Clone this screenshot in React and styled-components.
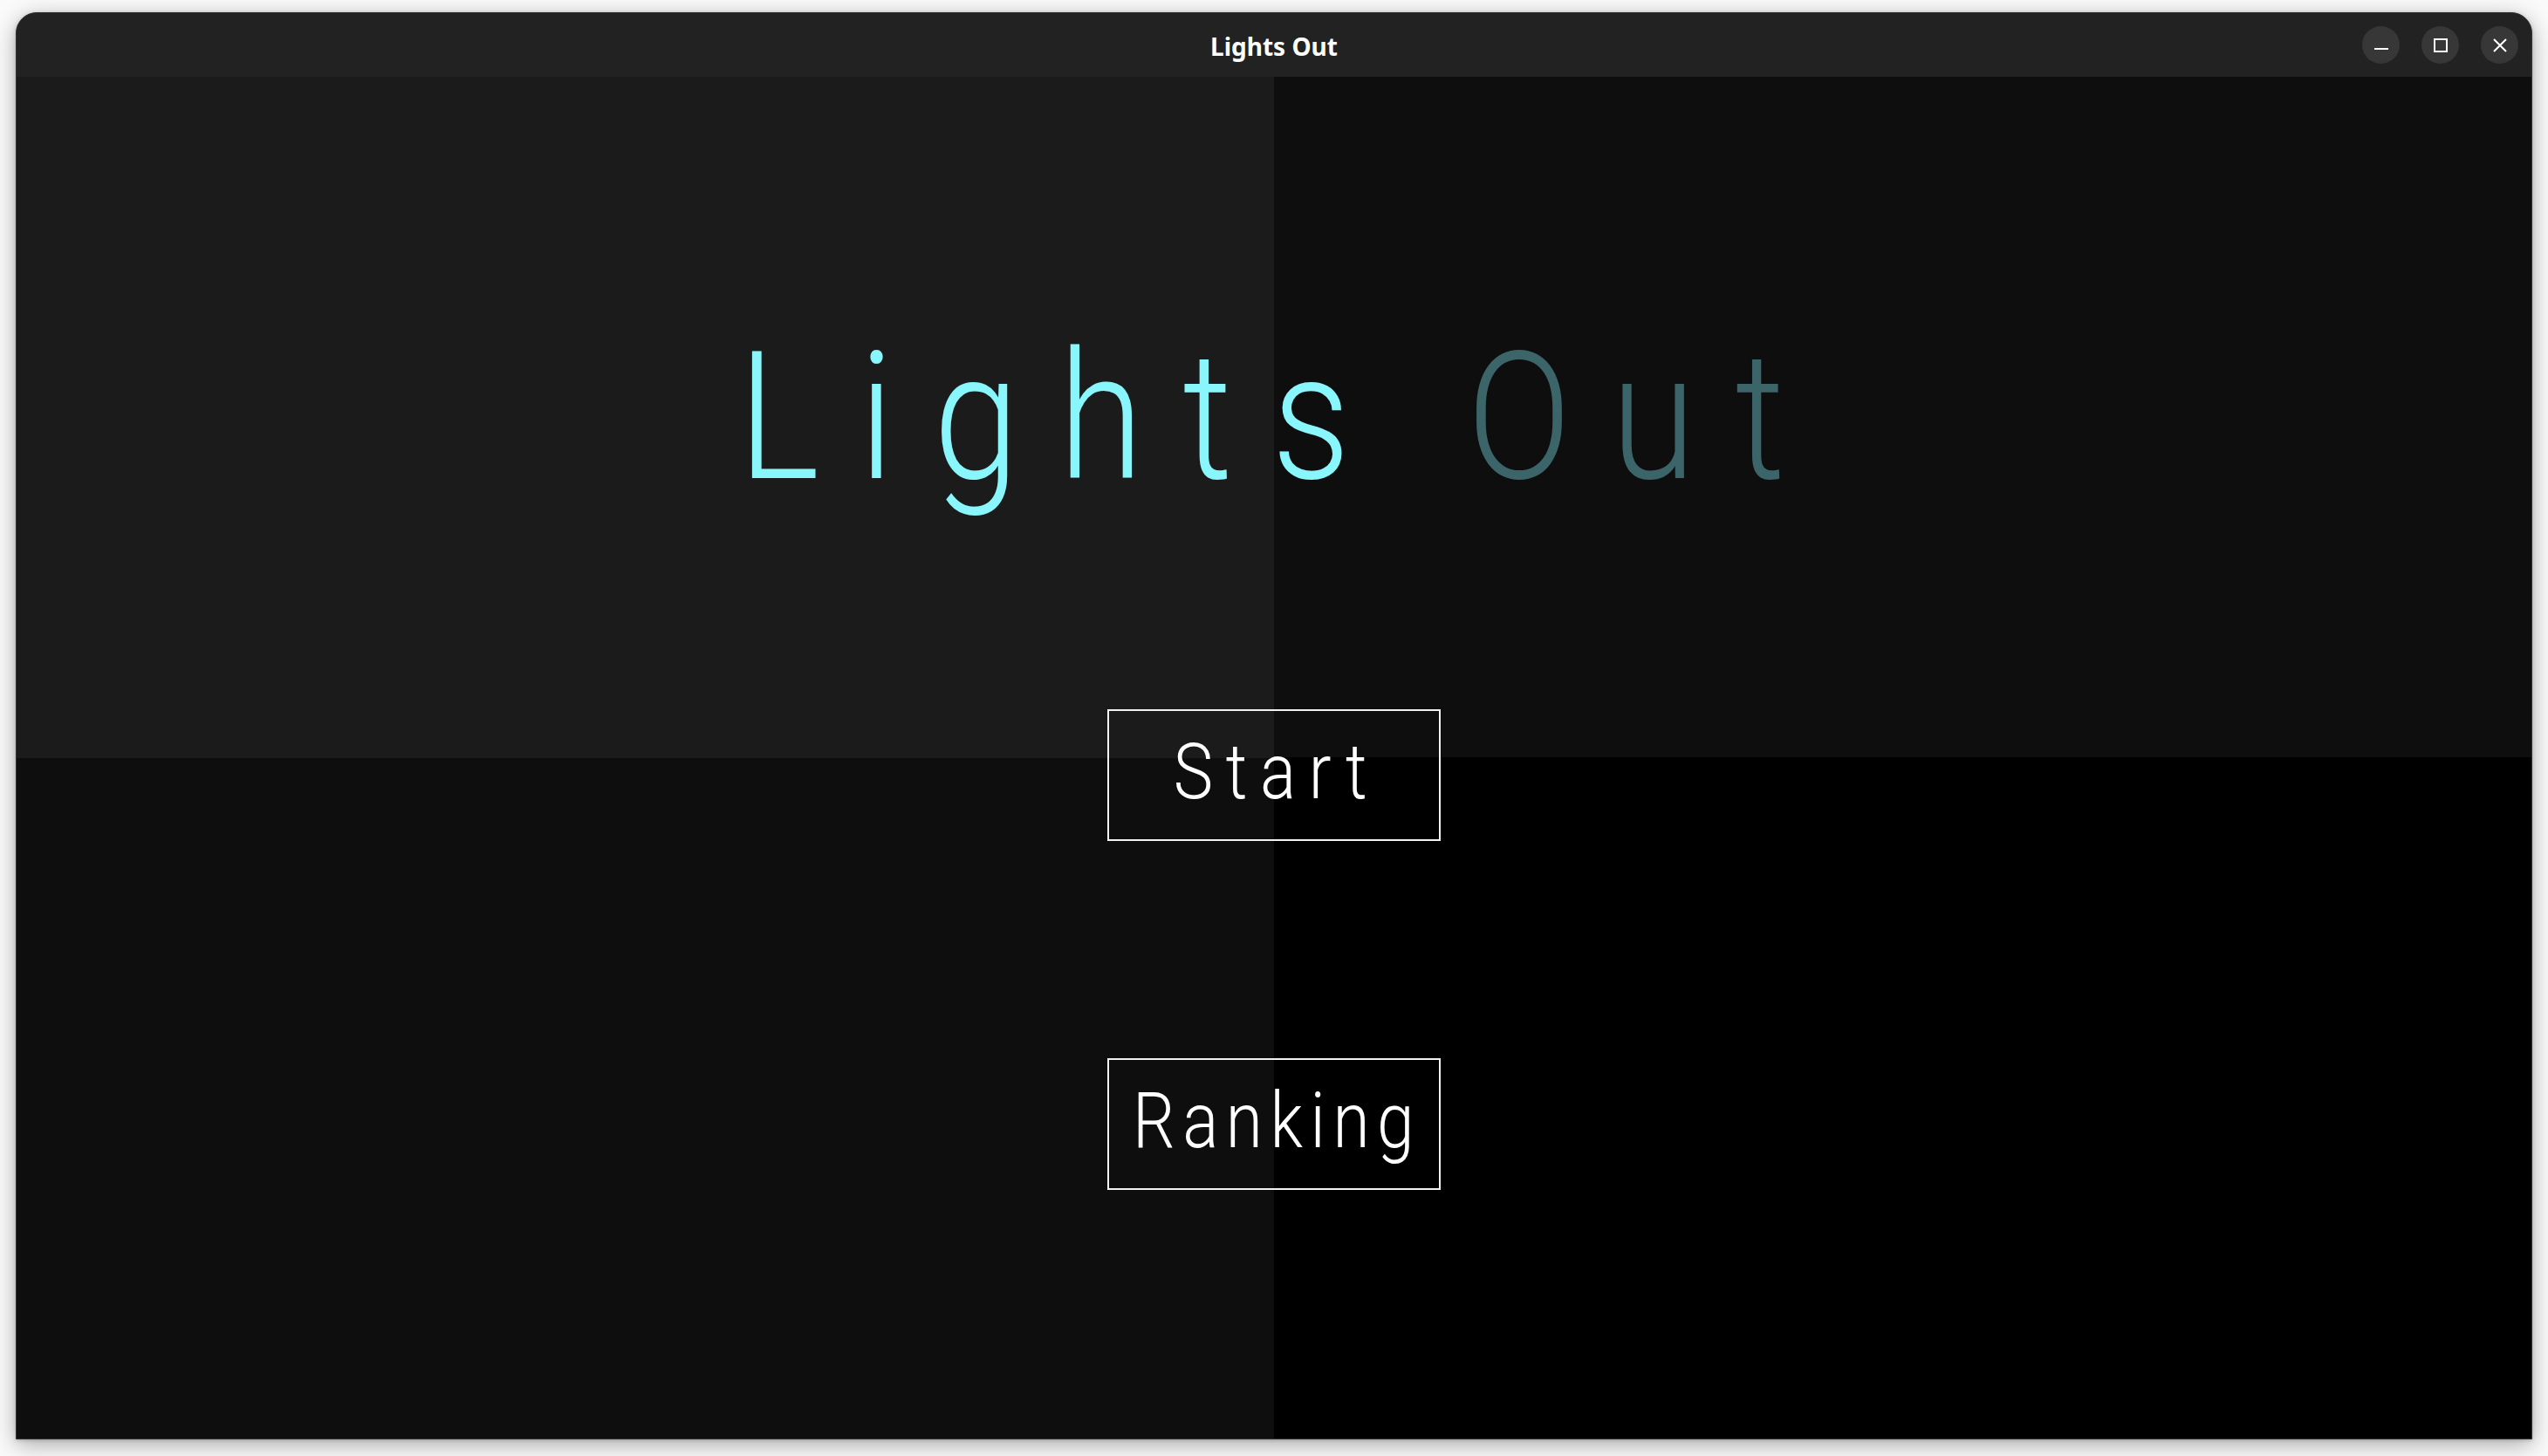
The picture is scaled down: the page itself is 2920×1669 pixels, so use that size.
import React from 'react'
import styled, { createGlobalStyle } from 'styled-components'

const GlobalStyle = createGlobalStyle`
  html, body {
    margin: 0;
    height: 100%;
    background: #fafafa;
  }
  #root {
    height: 100%;
  }
`

const Desktop = styled.div`
  box-sizing: border-box;
  height: 100vh;
  padding: 14px 18px 19px;
  display: flex;
`

const Window = styled.div`
  flex: 1;
  display: flex;
  flex-direction: column;
  border: 1px solid #343434;
  border-radius: 24px 24px 0 0;
  overflow: hidden;
  background: #222222;
  box-shadow: 0 6px 26px rgba(0, 0, 0, 0.32), 0 1px 4px rgba(0, 0, 0, 0.2);
`

const TitleBar = styled.header`
  height: 73px;
  flex: none;
  display: grid;
  grid-template-columns: 1fr auto 1fr;
  align-items: center;
  background: #222222;
`

const WindowTitle = styled.div`
  grid-column: 2;
  font-family: "Noto Sans", "Open Sans", sans-serif;
  font-weight: 700;
  font-size: 28px;
  color: #ffffff;
  padding-top: 2px;
`

const Controls = styled.div`
  grid-column: 3;
  justify-self: end;
  display: flex;
  gap: 25px;
  margin-right: 15px;
`

const ControlButton = styled.button`
  width: 43px;
  height: 43px;
  border: none;
  border-radius: 50%;
  background: #373737;
  padding: 0;
  display: flex;
  align-items: center;
  justify-content: center;
  cursor: pointer;

  svg {
    display: block;
  }
`

const Board = styled.main`
  flex: 1;
  display: flex;
  flex-direction: column;
  align-items: center;
  background: conic-gradient(
    from 0deg at 50% 50%,
    #0e0e0e 0deg 90deg,
    #000000 90deg 180deg,
    #0e0e0e 180deg 270deg,
    #1b1b1b 270deg 360deg
  );
`

// the game font is a narrow one, so Roboto Light gets squeezed a bit
const Heading = styled.h1`
  margin: 288px 0 0;
  padding-left: 20px;
  font-family: Roboto, "Open Sans", sans-serif;
  font-weight: 300;
  font-size: 205px;
  line-height: 1;
  letter-spacing: 53px;
  white-space: pre;
  transform: scaleX(0.86);
`

const Word = styled.span`
  color: ${(p) => (p.$dim ? '#3b6568' : '#89f6fc')};
`

const Menu = styled.nav`
  margin-top: 232px;
  display: flex;
  flex-direction: column;
  gap: 249px;
`

const MenuButton = styled.button`
  box-sizing: border-box;
  width: 382px;
  height: 151px;
  padding: 0 0 8px;
  border: 2px solid #f2f2f2;
  background: transparent;
  color: #ffffff;
  font-family: Roboto, "Open Sans", sans-serif;
  font-weight: 300;
  font-size: 89px;
  line-height: 1;
  cursor: pointer;
`

const Label = styled.span`
  display: inline-block;
  padding-left: ${(p) => p.$spacing - 10}px;
  letter-spacing: ${(p) => p.$spacing}px;
  transform: scaleX(0.86);
`

const MinimizeIcon = () => (
  <svg width="16" height="16" viewBox="0 0 16 16">
    <path d="M0 12h16" stroke="#fff" strokeWidth="2" />
  </svg>
)

const MaximizeIcon = () => (
  <svg width="16" height="16" viewBox="0 0 16 16">
    <rect x="1" y="1" width="14" height="14" fill="none" stroke="#fff" strokeWidth="2" />
  </svg>
)

const CloseIcon = () => (
  <svg width="16" height="16" viewBox="0 0 16 16">
    <path d="M1 1l14 14M15 1L1 15" stroke="#fff" strokeWidth="2" />
  </svg>
)

const App = () => {
  return (
    <>
      <GlobalStyle />
      <Desktop>
        <Window>
          <TitleBar>
            <WindowTitle>Lights Out</WindowTitle>
            <Controls>
              <ControlButton aria-label="Minimize"><MinimizeIcon /></ControlButton>
              <ControlButton aria-label="Maximize"><MaximizeIcon /></ControlButton>
              <ControlButton aria-label="Close"><CloseIcon /></ControlButton>
            </Controls>
          </TitleBar>
          <Board>
            <Heading>
              <Word>Lights</Word> <Word $dim>Out</Word>
            </Heading>
            <Menu>
              <MenuButton><Label $spacing={17}>Start</Label></MenuButton>
              <MenuButton><Label $spacing={10}>Ranking</Label></MenuButton>
            </Menu>
          </Board>
        </Window>
      </Desktop>
    </>
  )
}

export default App
